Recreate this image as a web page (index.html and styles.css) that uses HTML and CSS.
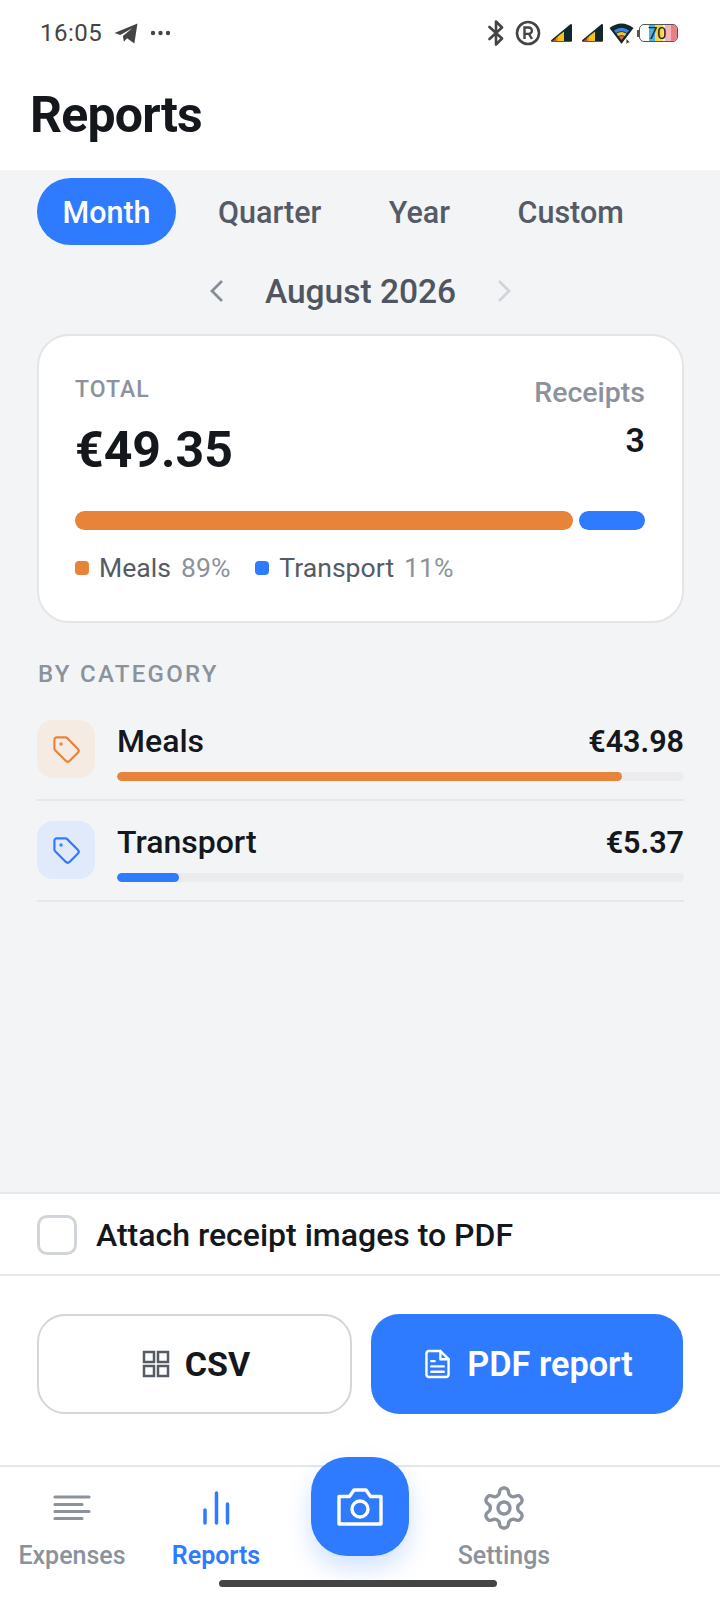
FILE: index.html

```html
<!DOCTYPE html>
<html lang="en">
<head>
    <meta charset="UTF-8">
    <meta name="viewport" content="width=device-width, initial-scale=1.0">
    <title>Reports</title>
    <link rel="stylesheet" href="styles.css">
</head>
<body>
<div class="app">
    <header class="top">
        <div class="status">
            <span class="time">16:05</span>
            <svg class="st-plane" width="24" height="21" viewBox="0 0 23 20"><path d="M0.5 9.500 22.500 0.500 19.500 19.500 12.500 14.500 9.500 18 8.500 12.500 17.500 5 6 11.500z" fill="#444"/></svg>
            <svg class="st-dots" width="21" height="6" viewBox="0 0 21 6"><g fill="#444"><circle cx="3" cy="3" r="2.200"/><circle cx="10.500" cy="3" r="2.200"/><circle cx="18" cy="3" r="2.200"/></g></svg>
            <div class="status-right">
                <svg width="16" height="26" viewBox="0 0 16 26"><path d="M1.500 7 14 18.500 8 24.500V1.500L14 7.500 1.500 19" fill="none" stroke="#444" stroke-width="2.600" stroke-linejoin="round" stroke-linecap="round"/></svg>
                <svg class="st-reg" width="26" height="26" viewBox="0 0 26 26"><circle cx="13" cy="13" r="11" fill="none" stroke="#444" stroke-width="2.600"/><path d="M9.500 19V7.500h4.200a3.200 3.200 0 0 1 0 6.400H9.500M14 14l3 5" fill="none" stroke="#444" stroke-width="2.400"/></svg>
                <svg class="st-sig" width="23" height="20" viewBox="0 0 23 20"><path d="M21 2 2 17.800h19z" fill="#10282a" stroke="#10282a" stroke-width="2" stroke-linejoin="round"/><path d="M14 8.500V18H8V13.300z" fill="#f7c21b"/><path d="M8 13.300V18H5.500V15.400z" fill="#f08a24"/><path d="M5.500 15.400V18H2.500z" fill="#e2402c"/></svg>
                <svg class="st-sig2" width="23" height="20" viewBox="0 0 23 20"><path d="M21 2 2 17.800h19z" fill="#10282a" stroke="#10282a" stroke-width="2" stroke-linejoin="round"/><path d="M14 8.500V18H8V13.300z" fill="#f7c21b"/><path d="M8 13.300V18H5.500V15.400z" fill="#f08a24"/><path d="M5.500 15.400V18H2.500z" fill="#e2402c"/></svg>
                <svg class="st-wifi" width="25" height="22" viewBox="0 0 25 22"><path d="M0.500 6Q12.500-3 24.500 6L13.500 20.500a1 1 0 0 1-2 0z" fill="#10282a"/><path d="M5 8.500Q12.500 3 20 8.500L18 11Q12.500 7.500 7 11z" fill="#3a86e8"/><path d="M7.500 11.500Q12.500 8.500 17.500 11.500L15.800 14Q12.500 12.500 9.200 14z" fill="#f3c623"/><path d="M9.700 14.500Q12.500 13.300 15.300 14.500L12.500 18z" fill="#e8613a"/><path d="M17.500 17v5l1.300-1.500h2z" fill="#333"/></svg>
                <div class="st-nub"></div>
                <div class="st-batt">
                    <div class="batt-fill"><span class="b-blue"></span><span class="b-yellow"></span><span class="b-rest"></span><span class="b-pink"></span><span class="b-red"></span></div>
                    <span class="batt-num">70</span>
                </div>
            </div>
        </div>
        <h1>Reports</h1>
    </header>

    <main class="content">
        <div class="tabs">
            <div class="tab active">Month</div>
            <div class="tab">Quarter</div>
            <div class="tab">Year</div>
            <div class="tab">Custom</div>
        </div>

        <div class="period">
            <svg width="16" height="24" viewBox="0 0 16 24"><path d="M13 2 3 12l10 10" fill="none" stroke="#878d97" stroke-width="2.800"/></svg>
            <span>August 2026</span>
            <svg width="16" height="24" viewBox="0 0 16 24"><path d="M3 2l10 10L3 22" fill="none" stroke="#d1d5db" stroke-width="2.800"/></svg>
        </div>

        <section class="card">
            <div class="card-top">
                <div>
                    <div class="total-label">TOTAL</div>
                    <div class="total-value">€49.35</div>
                </div>
                <div class="receipts">
                    <div class="receipts-label">Receipts</div>
                    <div class="receipts-value">3</div>
                </div>
            </div>
            <div class="split">
                <div class="seg orange" style="flex: 497"></div>
                <div class="seg blue" style="flex: 66"></div>
            </div>
            <div class="legend">
                <div class="legend-item"><i class="dot orange"></i>Meals<em>89%</em></div>
                <div class="legend-item"><i class="dot blue"></i>Transport<em>11%</em></div>
            </div>
        </section>

        <h2>BY CATEGORY</h2>

        <div class="row">
            <div class="row-icon meals">
                <svg width="29" height="29" viewBox="0 0 24 24" fill="none" stroke="currentColor" stroke-width="1.800" stroke-linecap="round" stroke-linejoin="round"><path d="M12.586 2.586A2 2 0 0 0 11.172 2H4a2 2 0 0 0-2 2v7.172a2 2 0 0 0 .586 1.414l8.704 8.704a2.426 2.426 0 0 0 3.420 0l6.580-6.580a2.426 2.426 0 0 0 0-3.420z"/><circle cx="7.500" cy="7.500" r=".5" fill="currentColor"/></svg>
            </div>
            <div class="row-body">
                <div class="row-line"><span class="row-name">Meals</span><span class="row-amt">€43.98</span></div>
                <div class="track"><div class="fill orange" style="width: 89%"></div></div>
            </div>
        </div>
        <div class="row">
            <div class="row-icon transport">
                <svg width="29" height="29" viewBox="0 0 24 24" fill="none" stroke="currentColor" stroke-width="1.800" stroke-linecap="round" stroke-linejoin="round"><path d="M12.586 2.586A2 2 0 0 0 11.172 2H4a2 2 0 0 0-2 2v7.172a2 2 0 0 0 .586 1.414l8.704 8.704a2.426 2.426 0 0 0 3.420 0l6.580-6.580a2.426 2.426 0 0 0 0-3.420z"/><circle cx="7.500" cy="7.500" r=".5" fill="currentColor"/></svg>
            </div>
            <div class="row-body">
                <div class="row-line"><span class="row-name">Transport</span><span class="row-amt">€5.37</span></div>
                <div class="track"><div class="fill blue" style="width: 11%"></div></div>
            </div>
        </div>
    </main>

    <div class="attach">
        <div class="checkbox"></div>
        <span>Attach receipt images to PDF</span>
    </div>

    <div class="actions">
        <div class="btn btn-csv">
            <svg width="28" height="28" viewBox="0 0 28 28" fill="none" stroke="#555b64" stroke-width="2.500"><rect x="2" y="2" width="10" height="10"/><rect x="16" y="2" width="10" height="10"/><rect x="2" y="16" width="10" height="10"/><rect x="16" y="16" width="10" height="10"/></svg>
            CSV
        </div>
        <div class="btn btn-pdf">
            <svg width="25" height="30" viewBox="0 0 26 30" fill="none" stroke="#fff" stroke-width="2.500" stroke-linecap="round" stroke-linejoin="round"><path d="M16 1.500H4A2.500 2.500 0 0 0 1.500 4v22A2.500 2.500 0 0 0 4 28.500h18a2.500 2.500 0 0 0 2.500-2.500V10z"/><path d="M16 1.500V10h8.500M6.500 12H10M6.500 17.500h13M6.500 23h13"/></svg>
            PDF report
        </div>
    </div>

    <nav class="nav">
        <div class="nav-item">
            <svg width="38" height="30" viewBox="0 0 38 30" fill="none" stroke="#8b929c" stroke-width="3.200" stroke-linecap="round"><path d="M2 4h34M2 11.500h27M2 18.500h34M2 25.500h27"/></svg>
            <span>Expenses</span>
        </div>
        <div class="nav-item active">
            <svg width="30" height="34" viewBox="0 0 30 34" fill="none" stroke="#2f7bff" stroke-width="3.500" stroke-linecap="round"><path d="M4 19v13M15.500 2v30M26.500 13v19"/></svg>
            <span>Reports</span>
        </div>
        <div class="nav-slot"></div>
        <div class="nav-item">
            <svg class="gear" width="48" height="48" viewBox="0 0 24 24" fill="none" stroke="#8b929c" stroke-width="1.700" stroke-linecap="round" stroke-linejoin="round"><path d="M12.220 2h-.44a2 2 0 0 0-2 2v.18a2 2 0 0 1-1 1.730l-.43.25a2 2 0 0 1-2 0l-.15-.08a2 2 0 0 0-2.730.73l-.22.38a2 2 0 0 0 .73 2.730l.15.1a2 2 0 0 1 1 1.720v.51a2 2 0 0 1-1 1.740l-.15.09a2 2 0 0 0-.73 2.730l.22.38a2 2 0 0 0 2.730.73l.15-.08a2 2 0 0 1 2 0l.43.25a2 2 0 0 1 1 1.730V20a2 2 0 0 0 2 2h.44a2 2 0 0 0 2-2v-.18a2 2 0 0 1 1-1.730l.43-.25a2 2 0 0 1 2 0l.15.08a2 2 0 0 0 2.730-.73l.22-.39a2 2 0 0 0-.73-2.730l-.15-.08a2 2 0 0 1-1-1.740v-.5a2 2 0 0 1 1-1.740l.15-.09a2 2 0 0 0 .73-2.730l-.22-.38a2 2 0 0 0-2.730-.73l-.15.08a2 2 0 0 1-2 0l-.43-.25a2 2 0 0 1-1-1.730V4a2 2 0 0 0-2-2z"/><circle cx="12" cy="12" r="3"/></svg>
            <span>Settings</span>
        </div>
        <div class="nav-slot"></div>
        <div class="fab">
            <svg width="48" height="40" viewBox="0 0 48 40" fill="none" stroke="#fff" stroke-width="3.400" stroke-linejoin="round"><path d="M3 9.500h10.500L18 3h12l4.500 6.500H45V37H3z"/><circle cx="24" cy="22" r="8"/></svg>
        </div>
        <div class="home-bar"></div>
    </nav>
</div>
</body>
</html>
```

FILE: styles.css

```css
* {
    box-sizing: border-box;
}
body {
    font-family: Roboto, "Liberation Sans", sans-serif;
    margin: 0;
    padding: 0;
    background-color: #fff;
    color: #14171c;
}
.app {
    width: 720px;
    height: 1600px;
    display: flex;
    flex-direction: column;
    overflow: hidden;
}

/* top */
.top {
    height: 170px;
    background-color: #fff;
}
.status {
    height: 66px;
    display: flex;
    align-items: center;
    padding-left: 40px;
    color: #444;
}
.time {
    font-size: 24px;
    letter-spacing: 0.5px;
}
.st-plane {
    margin-left: 12px;
}
.st-dots {
    margin-left: 12px;
}
.status-right {
    margin-left: auto;
    margin-right: 42px;
    display: flex;
    align-items: center;
}
.st-reg {
    margin-left: 11px;
}
.st-sig {
    margin-left: 9px;
}
.st-sig2 {
    margin-left: 8px;
}
.st-wifi {
    margin-left: 5px;
}
.st-nub {
    margin-left: 3px;
    width: 2px;
    height: 7px;
    background-color: #555;
}
.st-batt {
    position: relative;
    width: 39px;
    height: 18px;
    border: 1.500px solid #555;
    border-radius: 5px;
    overflow: hidden;
}
.batt-fill {
    display: flex;
    height: 100%;
}
.batt-fill span {
    display: block;
    height: 100%;
}
.b-rest {
    width: 2px;
    background-color: #fbf3e0;
}
.b-blue {
    width: 6px;
    margin-left: 9px;
    background-color: #45b4e8;
}
.b-yellow {
    width: 8px;
    background-color: #f7d64a;
}
.b-pink {
    width: 6px;
    background-color: #f4b4b8;
}
.b-red {
    width: 6px;
    background-color: #e97f86;
}
.batt-num {
    position: absolute;
    left: 8px;
    top: -1px;
    font-size: 17px;
    line-height: 18px;
    letter-spacing: -0.5px;
    color: #222;
}
h1 {
    margin: 0;
    padding-left: 30px;
    font-size: 50px;
    line-height: 98px;
    font-weight: 700;
    letter-spacing: -0.8px;
}

/* main area */
.content {
    flex: 1;
    background-color: #f3f4f6;
    padding: 8px 36px 0 37px;
}
.tabs {
    display: flex;
    gap: 16.500px;
}
.tab {
    height: 67px;
    padding: 0 25.500px;
    border-radius: 34px;
    font-size: 30.500px;
    font-weight: 500;
    line-height: 70px;
    color: #555b66;
}
.tab.active {
    background-color: #2f7bff;
    color: #fff;
}
.period {
    display: flex;
    align-items: center;
    justify-content: center;
    gap: 40px;
    height: 46px;
    margin-top: 23px;
    font-size: 33.500px;
    font-weight: 500;
    color: #4f5661;
}
.card {
    margin-top: 20px;
    height: 289px;
    background-color: #fff;
    border: 2px solid #e3e5e9;
    border-radius: 32px;
    padding: 39px 37px 0 36px;
}
.card-top {
    display: flex;
    justify-content: space-between;
    height: 136px;
}
.total-label {
    font-size: 23px;
    font-weight: 500;
    line-height: 30px;
    letter-spacing: 1px;
    color: #8b929c;
}
.total-value {
    margin-top: 14px;
    font-size: 50px;
    font-weight: 700;
    line-height: 62px;
}
.receipts {
    margin-top: -2px;
    text-align: right;
}
.receipts-label {
    font-size: 28.500px;
    font-weight: 500;
    line-height: 40px;
    color: #8b929c;
}
.receipts-value {
    margin-top: 7px;
    font-size: 34px;
    font-weight: 600;
    line-height: 40px;
}
.split {
    display: flex;
    gap: 6px;
}
.seg {
    height: 19px;
    border-radius: 10px;
}
.orange {
    background-color: #e8833a;
}
.blue {
    background-color: #2f7bff;
}
.legend {
    display: flex;
    gap: 25px;
    margin-top: 21px;
}
.legend-item {
    display: flex;
    align-items: center;
    font-size: 26.600px;
    line-height: 34px;
    color: #555b66;
}
.legend-item em {
    font-style: normal;
    margin-left: 10px;
    color: #8b929c;
}
.dot {
    width: 14px;
    height: 14px;
    border-radius: 4px;
    margin-right: 10px;
}
h2 {
    margin: 37px 0 0 1px;
    font-size: 24px;
    font-weight: 500;
    line-height: 28px;
    letter-spacing: 2.300px;
    color: #8b929c;
}
.row {
    display: flex;
    gap: 22px;
    height: 101px;
    padding-top: 20px;
    border-bottom: 2px solid #e5e7eb;
}
h2 + .row {
    margin-top: 12px;
}
.row-icon {
    width: 58px;
    height: 58px;
    border-radius: 16px;
    display: flex;
    align-items: center;
    justify-content: center;
}
.row-icon.meals {
    background-color: #f5ebe3;
    color: #e8833a;
}
.row-icon.transport {
    background-color: #e0eafa;
    color: #2f7bff;
}
.row-body {
    flex: 1;
}
.row-line {
    display: flex;
    justify-content: space-between;
    align-items: center;
    height: 42px;
}
.row-name {
    font-size: 32px;
    font-weight: 500;
}
.row-amt {
    font-size: 30.500px;
    font-weight: 600;
}
.track {
    margin-top: 10px;
    height: 9px;
    background-color: #ececee;
    border-radius: 5px;
    overflow: hidden;
}
.fill {
    height: 100%;
    border-radius: 5px;
}

/* bottom */
.attach {
    height: 84px;
    display: flex;
    align-items: center;
    gap: 19px;
    padding: 2px 0 0 37px;
    background-color: #fff;
    border-top: 2px solid #e5e7eb;
    border-bottom: 2px solid #e5e7eb;
    font-size: 32px;
    font-weight: 500;
    color: #14171c;
}
.checkbox {
    width: 40px;
    height: 40px;
    border: 3.500px solid #d1d5db;
    border-radius: 10px;
}
.actions {
    height: 189px;
    display: flex;
    gap: 19px;
    padding: 38px 37px 0;
    background-color: #fff;
}
.btn {
    height: 100px;
    display: flex;
    align-items: center;
    justify-content: center;
    border-radius: 28px;
    font-size: 34px;
    font-weight: 700;
}
.btn-csv {
    width: 315px;
    gap: 15px;
    padding-left: 3px;
    border: 2px solid #d3d6da;
    color: #14171c;
}
.btn-pdf {
    flex: 1;
    gap: 17px;
    padding-left: 4px;
    background-color: #2f7bff;
    color: #fff;
    font-size: 34.300px;
    font-weight: 600;
}
.nav {
    position: relative;
    height: 135px;
    display: grid;
    grid-template-columns: repeat(5, 144px);
    background-color: #fff;
    border-top: 2px solid #e5e7eb;
}
.nav-item {
    display: flex;
    flex-direction: column;
    align-items: center;
    justify-content: flex-start;
    height: 106px;
    padding-top: 24px;
    font-size: 25px;
    font-weight: 500;
    color: #8b929c;
}
.nav-item svg {
    height: 34px;
}
.nav-item svg.gear {
    height: 48px;
    margin-top: -7px;
    margin-bottom: -7px;
}
.nav-item span {
    margin-top: 14px;
    line-height: 34px;
}
.nav-item.active {
    color: #2f7bff;
    font-weight: 600;
}
.fab {
    position: absolute;
    left: 311px;
    top: -10px;
    width: 98px;
    height: 99px;
    border-radius: 36px;
    background-color: #2f7bff;
    box-shadow: 0 12px 24px rgba(47, 123, 255, 0.22);
    display: flex;
    align-items: center;
    justify-content: center;
}
.home-bar {
    position: absolute;
    left: 219px;
    bottom: 13px;
    width: 278px;
    height: 7px;
    border-radius: 4px;
    background-color: #444;
}
```
